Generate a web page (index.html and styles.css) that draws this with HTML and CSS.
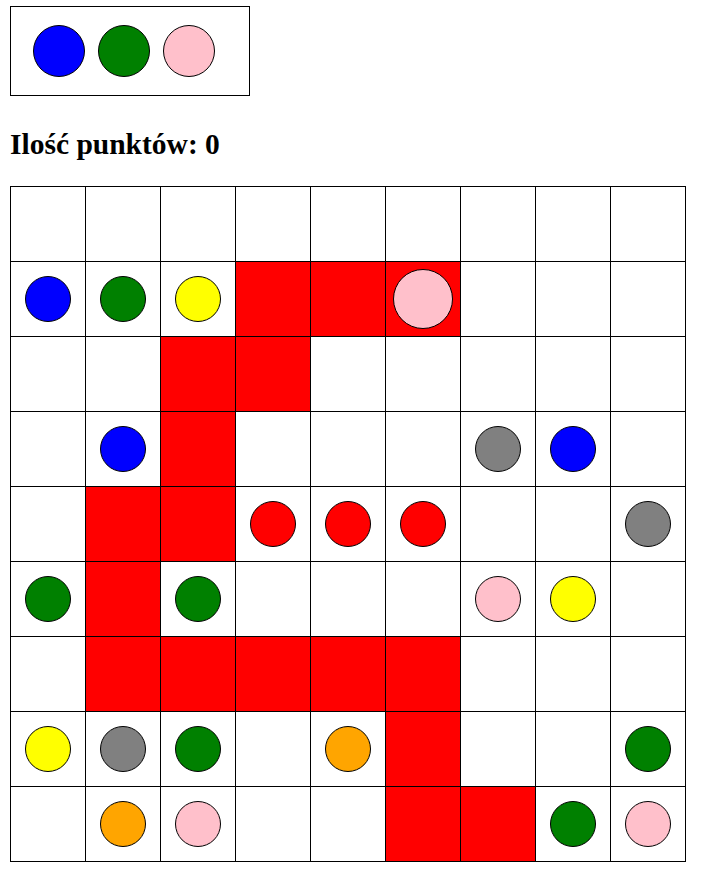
FILE: index.html
```html
<!DOCTYPE html>
<html lang="pl">
<head>
<meta charset="utf-8">
<title>Kulki</title>
<link rel="stylesheet" href="styles.css">
</head>
<body>
<div class="next">
  <span class="ball big blue"></span>
  <span class="ball big green"></span>
  <span class="ball big pink"></span>
</div>
<h2 class="score">Ilość punktów: 0</h2>
<div class="board">
  <div class="cell"></div><div class="cell"></div><div class="cell"></div><div class="cell"></div><div class="cell"></div><div class="cell"></div><div class="cell"></div><div class="cell"></div><div class="cell"></div>

  <div class="cell"><span class="ball blue"></span></div><div class="cell"><span class="ball green"></span></div><div class="cell"><span class="ball yellow"></span></div><div class="cell path"></div><div class="cell path"></div><div class="cell path"><span class="ball sel pink"></span></div><div class="cell"></div><div class="cell"></div><div class="cell"></div>

  <div class="cell"></div><div class="cell"></div><div class="cell path"></div><div class="cell path"></div><div class="cell"></div><div class="cell"></div><div class="cell"></div><div class="cell"></div><div class="cell"></div>

  <div class="cell"></div><div class="cell"><span class="ball blue"></span></div><div class="cell path"></div><div class="cell"></div><div class="cell"></div><div class="cell"></div><div class="cell"><span class="ball gray"></span></div><div class="cell"><span class="ball blue"></span></div><div class="cell"></div>

  <div class="cell"></div><div class="cell path"></div><div class="cell path"></div><div class="cell"><span class="ball red"></span></div><div class="cell"><span class="ball red"></span></div><div class="cell"><span class="ball red"></span></div><div class="cell"></div><div class="cell"></div><div class="cell"><span class="ball gray"></span></div>

  <div class="cell"><span class="ball green"></span></div><div class="cell path"></div><div class="cell"><span class="ball green"></span></div><div class="cell"></div><div class="cell"></div><div class="cell"></div><div class="cell"><span class="ball pink"></span></div><div class="cell"><span class="ball yellow"></span></div><div class="cell"></div>

  <div class="cell"></div><div class="cell path"></div><div class="cell path"></div><div class="cell path"></div><div class="cell path"></div><div class="cell path"></div><div class="cell"></div><div class="cell"></div><div class="cell"></div>

  <div class="cell"><span class="ball yellow"></span></div><div class="cell"><span class="ball gray"></span></div><div class="cell"><span class="ball green"></span></div><div class="cell"></div><div class="cell"><span class="ball orange"></span></div><div class="cell path"></div><div class="cell"></div><div class="cell"></div><div class="cell"><span class="ball green"></span></div>

  <div class="cell"></div><div class="cell"><span class="ball orange"></span></div><div class="cell"><span class="ball pink"></span></div><div class="cell"></div><div class="cell"></div><div class="cell path"></div><div class="cell path"></div><div class="cell"><span class="ball green"></span></div><div class="cell"><span class="ball pink"></span></div>
</div>
</body>
</html>
```

FILE: styles.css
```css
html, body {
  margin: 0;
  background: #fff;
}
body {
  padding: 6px 10px;
  font-family: "Liberation Serif", "Times New Roman", serif;
  color: #000;
}
.next {
  box-sizing: border-box;
  width: 240px;
  height: 90px;
  border: 1px solid #000;
  display: flex;
  align-items: center;
  gap: 13px;
  padding-left: 22px;
}
.score {
  margin: 31px 0 25px 0;
  font-size: 29.5px;
  line-height: 34px;
  font-weight: bold;
}
.board {
  display: grid;
  grid-template-columns: repeat(9, 74px);
  grid-auto-rows: 74px;
  gap: 1px;
  padding: 1px;
  background: #000;
  width: max-content;
}
.cell {
  background: #fff;
  display: flex;
  align-items: center;
  justify-content: center;
}
.cell.path {
  background: #ff0000;
}
.ball {
  box-sizing: border-box;
  display: block;
  width: 46px;
  height: 46px;
  border-radius: 50%;
  border: 1px solid #000;
}
.ball.big {
  width: 52px;
  height: 52px;
  flex: none;
}
.ball.sel {
  width: 60px;
  height: 60px;
}
.blue { background: #0000ff; }
.green { background: #008000; }
.yellow { background: #ffff00; }
.pink { background: #ffc0cb; }
.red { background: #ff0000; }
.gray { background: #808080; }
.orange { background: #ffa500; }
```
